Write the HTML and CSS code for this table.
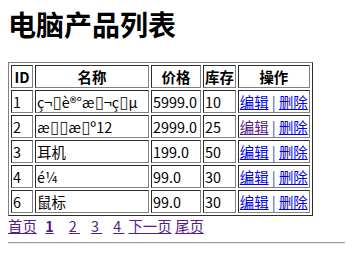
FILE: index.html
```html
<!DOCTYPE html>
<html lang="zh-CN">
<head>
<meta charset="utf-8">
<title>电脑产品列表</title>
<link rel="stylesheet" href="styles.css">
</head>
<body>
<h1 class="title">电脑产品列表</h1>
<table class="products">
  <thead>
    <tr>
      <th class="c-id">ID</th>
      <th class="c-name">名称</th>
      <th class="c-price">价格</th>
      <th class="c-stock">库存</th>
      <th class="c-ops">操作</th>
    </tr>
  </thead>
  <tbody>
    <tr>
      <td>1</td>
      <td>ç¬<span class="tofu">▯</span>è®°æ<span class="tofu">▯</span>¬ç<span class="tofu">▯</span>µ</td>
      <td>5999.0</td>
      <td>10</td>
      <td><a href="#e1">编辑</a> <span class="sep">|</span> <a href="#d1">删除</a></td>
    </tr>
    <tr>
      <td>2</td>
      <td>æ<span class="tofu">▯</span><span class="tofu">▯</span>æ<span class="tofu">▯</span>º12</td>
      <td>2999.0</td>
      <td>25</td>
      <td><a class="visited" href="#e2">编辑</a> <span class="sep">|</span> <a href="#d2">删除</a></td>
    </tr>
    <tr>
      <td>3</td>
      <td>耳机</td>
      <td>199.0</td>
      <td>50</td>
      <td><a href="#e3">编辑</a> <span class="sep">|</span> <a href="#d3">删除</a></td>
    </tr>
    <tr>
      <td>4</td>
      <td>é¼</td>
      <td>99.0</td>
      <td>30</td>
      <td><a href="#e4">编辑</a> <span class="sep">|</span> <a href="#d4">删除</a></td>
    </tr>
    <tr>
      <td>6</td>
      <td>鼠标</td>
      <td>99.0</td>
      <td>30</td>
      <td><a href="#e6">编辑</a> <span class="sep">|</span> <a href="#d6">删除</a></td>
    </tr>
  </tbody>
</table>
<div class="pager">
  <a class="visited" href="#p1">首页</a><a class="visited cur gap-s" href="#p1">1</a><a class="visited gap-l" href="#p2">2&nbsp;</a><a class="visited gap-m" href="#p3">3&nbsp;</a><a class="visited gap-m" href="#p4">4&nbsp;</a><a class="visited gap-x" href="#p2">下一页</a><a class="visited gap-t" href="#p4">尾页</a>
</div>
<hr class="rule">
</body>
</html>
```
FILE: styles.css
```css
html, body {
  margin: 0;
  padding: 0;
}
body {
  padding: 8px;
  font-family: "Noto Sans CJK SC", "Noto Sans", sans-serif;
  font-size: 14.4px;
  color: #000;
  background: #fff;
}
.title {
  font-size: 28px;
  font-weight: 700;
  line-height: 32px;
  margin: 0 0 22px;
}
.products {
  border-collapse: separate;
  border-spacing: 2px;
  border: 1px outset gray;
}
.products th,
.products td {
  border: 1px inset gray;
  padding: 1px;
  height: 19px;
  line-height: 19px;
  white-space: nowrap;
  overflow: hidden;
  box-sizing: content-box;
}
.products th {
  font-weight: 700;
  text-align: center;
}
.products td {
  text-align: left;
}
.c-id { width: 18px; }
.c-name { width: 110px; }
.c-price { width: 46px; }
.c-stock { width: 28px; }
.c-ops { width: 67px; }
.tofu {
  display: inline-block;
  font-family: "DejaVu Sans", sans-serif;
  font-size: 17px;
  line-height: 12px;
  height: 12px;
  color: #333;
  vertical-align: baseline;
}
a {
  color: #0000ee;
  text-decoration: underline;
}
a.visited {
  color: #551a8b;
}
.sep {
  color: #1e5aa0;
}
.pager {
  height: 19px;
  line-height: 19px;
}
.pager .cur {
  font-weight: 700;
}
.gap-s { margin-left: 8.5px; }
.gap-l { margin-left: 15px; }
.gap-m { margin-left: 11px; }
.gap-x { margin-left: 4px; }
.gap-t { margin-left: 3.5px; }
.rule {
  margin: 7px 0 0;
  border: 0;
  border-top: 1px solid #9a9a9a;
  border-bottom: 1px solid #eeeeee;
  height: 0;
}
```
